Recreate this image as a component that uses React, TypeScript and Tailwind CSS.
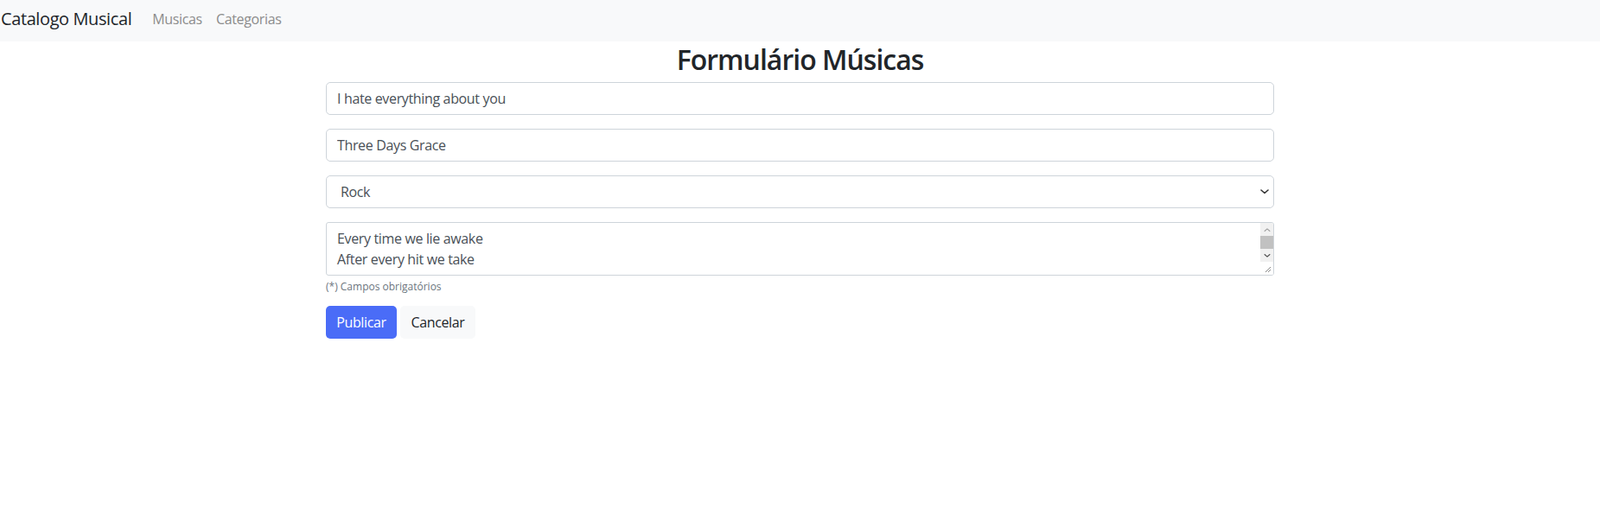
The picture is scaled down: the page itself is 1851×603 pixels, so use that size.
import { useState } from "react";

const fontStack = { fontFamily: '"Open Sans", "Noto Sans", sans-serif' };

const Navbar = () => (
  <nav className="flex h-[48px] items-center bg-[#f8f9fa] pb-[4px]">
    <a href="#" className="ml-[1px] mr-[16px] text-[20px] leading-[30px] tracking-[-0.4px] text-[#212529]">
      Catalogo Musical
    </a>
    <a href="#" className="px-[8px] text-[16px] leading-[24px] text-[#8c8c8c]">
      Musicas
    </a>
    <a href="#" className="px-[8px] text-[16px] leading-[24px] text-[#8c8c8c]">
      Categorias
    </a>
  </nav>
);

const Chevron = ({ up = false, className = "" }: { up?: boolean; className?: string }) => (
  <svg width="10" height="6" viewBox="0 0 10 6" className={className}>
    <path
      d={up ? "M1 5 L5 1.5 L9 5" : "M1 1 L5 4.5 L9 1"}
      fill="none"
      stroke="currentColor"
      strokeWidth="1.6"
      strokeLinecap="round"
      strokeLinejoin="round"
    />
  </svg>
);

export default function App() {
  const [titulo, setTitulo] = useState("I hate everything about you");
  const [artista, setArtista] = useState("Three Days Grace");
  const [categoria, setCategoria] = useState("rock");
  const [letra, setLetra] = useState(
    "Every time we lie awake\nAfter every hit we take\nFeeling like I'm sleeping with a ghost\nWhy do I love you?",
  );

  return (
    <div className="min-h-[603px] bg-white tracking-[-0.35px] text-[#212529]" style={fontStack}>
      <Navbar />

      <h2 className="mt-[2px] mb-[7px] text-center text-[32px] font-semibold leading-[38px] tracking-[-1px] text-[#212529]">
        Formulário Músicas
      </h2>

      <form className="mx-auto w-[1097px]" onSubmit={(e) => e.preventDefault()}>
        <input
          value={titulo}
          onChange={(e) => setTitulo(e.target.value)}
          className="mb-[16px] block h-[38px] w-full rounded-[5px] border border-[#ced4da] px-[12px] text-[16px] text-[#495057] outline-none"
        />
        <input
          value={artista}
          onChange={(e) => setArtista(e.target.value)}
          className="mb-[16px] block h-[38px] w-full rounded-[5px] border border-[#ced4da] px-[12px] text-[16px] text-[#495057] outline-none"
        />

        <div className="relative mb-[16px]">
          <select
            value={categoria}
            onChange={(e) => setCategoria(e.target.value)}
            className="block h-[38px] w-full appearance-none rounded-[5px] border border-[#ced4da] bg-white pl-[16px] pr-[32px] text-[16px] text-[#495057] outline-none"
          >
            <option value="rock">Rock</option>
            <option value="pop">Pop</option>
            <option value="mpb">MPB</option>
          </select>
          <Chevron className="pointer-events-none absolute right-[6px] top-[16px] text-[#333]" />
        </div>

        <div className="flex h-[62px] overflow-hidden rounded-[3px] border border-[#ced4da]">
          <textarea
            value={letra}
            onChange={(e) => setLetra(e.target.value)}
            rows={2}
            className="flex-1 resize-none overflow-hidden px-[12px] py-[6px] text-[16px] leading-[24px] text-[#495057] outline-none"
          />
          <div className="flex w-[15px] flex-col bg-[#f1f1f1]">
            <div className="flex h-[15px] items-center justify-center text-[#a3a3a3]">
              <Chevron up className="scale-75" />
            </div>
            <div className="h-[15px] bg-[#c1c1c1]" />
            <div className="flex h-[15px] items-center justify-center text-[#505050]">
              <Chevron className="scale-75" />
            </div>
            <div className="flex flex-1 items-end justify-end bg-white p-[2px]">
              <svg width="8" height="8" viewBox="0 0 8 8">
                <path d="M7 1 L1 7 M7 4 L4 7" stroke="#888" strokeWidth="1" />
              </svg>
            </div>
          </div>
        </div>
        <small className="mt-[4px] block text-[12px] leading-[18px] tracking-normal text-[#6c757d]">
          (*) Campos obrigatórios
        </small>

        <div className="mt-[13px] flex gap-[4px]">
          <button
            type="submit"
            className="h-[38px] w-[82px] rounded-[5px] bg-[#4a6cf7] text-[16px] text-white"
          >
            Publicar
          </button>
          <button
            type="button"
            className="h-[38px] w-[87px] rounded-[5px] bg-[#f8f9fa] text-[16px] text-[#212529]"
          >
            Cancelar
          </button>
        </div>
      </form>
    </div>
  );
}
